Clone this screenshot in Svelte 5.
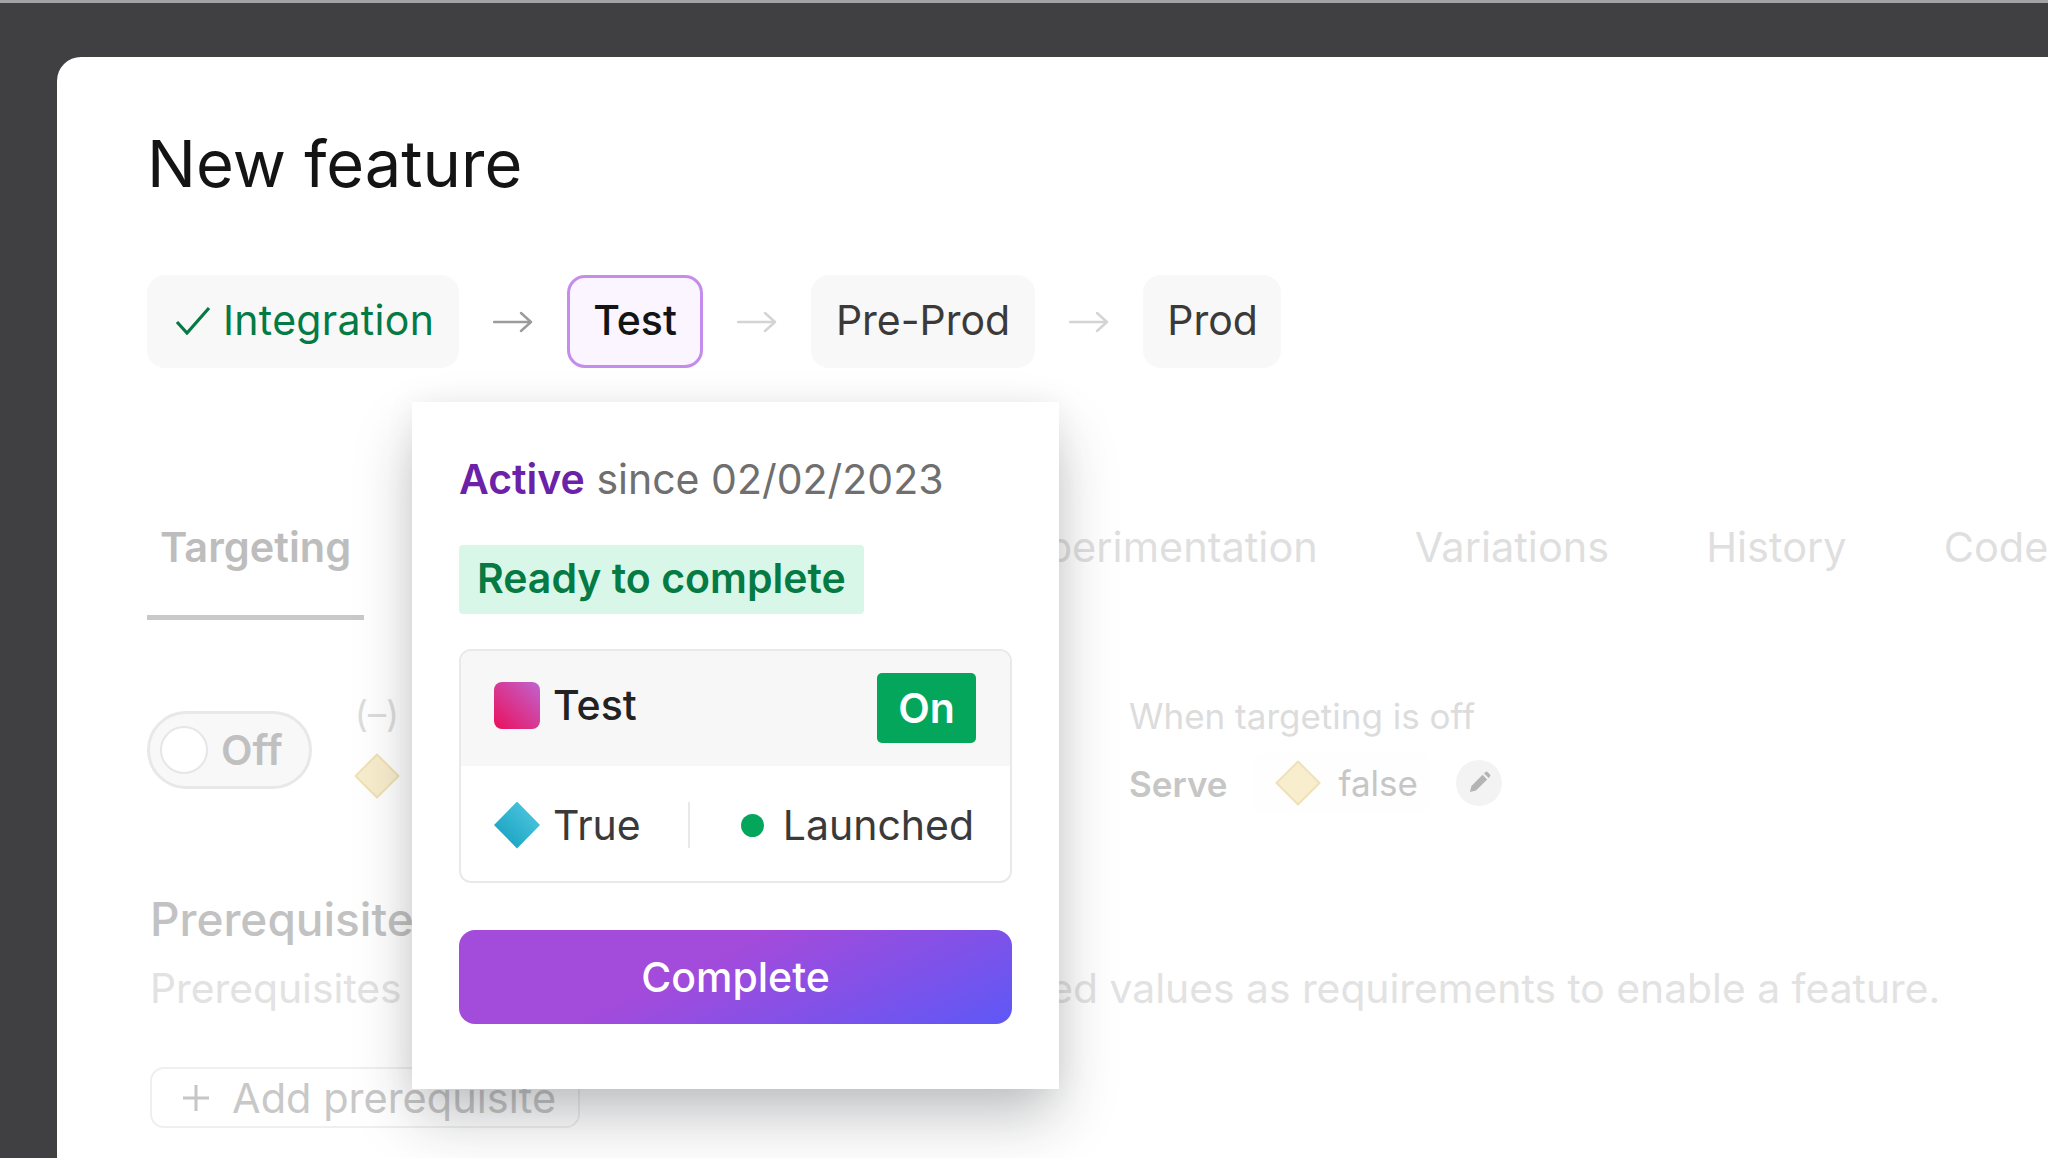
<script lang="ts">
	const tabs = ['Experimentation', 'Variations', 'History', 'Code'];
	const envs = [
		{ name: 'Pre-Prod', next: true },
		{ name: 'Prod', next: false }
	];
</script>

{#snippet arrow(faded = false)}
	<svg class="arrow" class:faded width="40" height="24" viewBox="0 0 40 24" fill="none">
		<path d="M1 12h37M28 3l10 9-10 9" stroke-width="2.4" stroke-linecap="round" stroke-linejoin="round" />
	</svg>
{/snippet}

{#snippet flag()}
	<svg class="flag" width="46" height="46" viewBox="0 0 46 46">
		<path d="M23 1.5L44.5 23 23 44.5 1.5 23z" fill="#f8eecd" stroke="#efe1b6" stroke-width="2" stroke-linejoin="round" />
	</svg>
{/snippet}

<div class="desktop">
	<main class="card">
		<h1>New feature</h1>

		<nav class="steps">
			<div class="step done">
				<svg width="36" height="30" viewBox="0 0 36 30" fill="none">
					<path d="M2 17l10 11L34 3" stroke="#047a44" stroke-width="3.2" />
				</svg>
				Integration
			</div>
			{@render arrow()}
			<div class="step current">Test</div>
			{@render arrow(true)}
			{#each envs as env}
				<div class="step" class:last={!env.next}>{env.name}</div>
				{#if env.next}
					{@render arrow(true)}
				{/if}
			{/each}
		</nav>

		<div class="tabs">
			<div class="tab active">Targeting</div>
			<div class="tab-list">
				{#each tabs as t}
					<div class="tab">{t}</div>
				{/each}
			</div>
		</div>

		<div class="targeting">
			<div class="toggle">
				<span class="knob"></span>
				<span>Off</span>
			</div>
			<div class="default-col">
				<span class="paren">(–)</span>
				{@render flag()}
			</div>
			<div class="off-col">
				<div class="off-label">When targeting is off</div>
				<div class="serve">
					<b>Serve</b>
					<div class="serve-pill">
						{@render flag()}
						<span>false</span>
					</div>
					<div class="edit">
						<svg width="24" height="24" viewBox="0 0 24 24" fill="#b4b4b4">
							<path d="M3 21l1.4-6L15.6 3.8l4.6 4.6L9 19.6zM17 2.4l1.5-1.4a1.5 1.5 0 0 1 2 0L23 3.4a1.5 1.5 0 0 1 0 2L21.6 7z" />
						</svg>
					</div>
				</div>
			</div>
		</div>

		<section class="prereq">
			<h2>Prerequisites</h2>
			<p>Prerequisites let you apply other features' served values as requirements to enable a feature.</p>
			<div class="add">
				<svg width="28" height="28" viewBox="0 0 28 28" fill="none">
					<path d="M14 1v26M1 14h26" stroke="#c6c6c6" stroke-width="3" />
				</svg>
				Add prerequisite
			</div>
		</section>

		<aside class="popover">
			<div class="since"><strong>Active</strong> since 02/02/2023</div>
			<div class="ready">Ready to complete</div>
			<div class="env-box">
				<div class="env-head">
					<span class="env-color"></span>
					<span class="env-name">Test</span>
					<span class="on">On</span>
				</div>
				<div class="env-body">
					<span class="true-flag"></span>
					<span class="true-text">True</span>
					<span class="sep"></span>
					<span class="dot"></span>
					<span>Launched</span>
				</div>
			</div>
			<button class="complete">Complete</button>
		</aside>
	</main>
</div>

<style>
	:global(body) {
		margin: 0;
		background: #404042;
	}

	.desktop {
		box-sizing: border-box;
		height: 1158px;
		overflow: hidden;
		padding: 54px 0 0 57px;
		background: #404042;
		border-top: 3px solid #a3a3a4;
		font-family: Inter, 'Noto Sans', sans-serif;
	}

	.card {
		position: relative;
		height: 1200px;
		padding: 68px 0 0 90px;
		box-sizing: border-box;
		background: #fff;
		border-radius: 24px 0 0 0;
	}

	h1 {
		margin: 0;
		font-size: 65px;
		font-weight: 400;
		line-height: 78px;
		color: #141414;
	}

	.steps {
		display: flex;
		align-items: center;
		gap: 34px;
		margin-top: 72px;
		font-size: 41px;
	}

	.step {
		display: flex;
		align-items: center;
		height: 93px;
		box-sizing: border-box;
		padding: 0 25px 4px;
		background: #f8f8f8;
		border-radius: 18px;
		color: #3a3a3a;
	}

	.step.done {
		gap: 12px;
		padding-left: 28px;
		color: #047a44;
		letter-spacing: 0.3px;
	}

	.step.current {
		padding: 0 23px 4px;
		border: 3px solid #c58cec;
		background: #faf5fe;
		color: #141414;
		font-weight: 500;
	}

	.step.last {
		padding: 0 23px 4px 24px;
	}

	.arrow {
		stroke: #9b9b9b;
		flex: none;
	}

	.arrow.faded {
		stroke: #d4d4d4;
	}

	.tabs {
		display: flex;
		margin-top: 155px;
		font-size: 41.5px;
		line-height: 48px;
		color: #dfdfdf;
		white-space: nowrap;
	}

	.tab {
		padding: 0 0 44px;
	}

	.tab.active {
		padding: 0 13px 44px;
		border-bottom: 5px solid #c9c9c9;
		color: #bdbdbd;
		font-weight: 600;
	}

	.tab-list {
		display: flex;
		gap: 97px;
		margin-left: 635px;
	}

	.targeting {
		display: flex;
		align-items: flex-start;
		margin-top: 74px;
	}

	.toggle {
		display: flex;
		align-items: center;
		gap: 13px;
		width: 165px;
		height: 78px;
		box-sizing: border-box;
		margin-top: 17px;
		padding-left: 10px;
		background: #f8f8f8;
		border: 3px solid #e8e8e8;
		border-radius: 40px;
		font-size: 41px;
		font-weight: 600;
		color: #c0c0c0;
	}

	.knob {
		width: 48px;
		height: 48px;
		background: #fff;
		border: 2px solid #e6e6e6;
		border-radius: 50%;
		box-sizing: border-box;
	}

	.default-col {
		display: flex;
		flex-direction: column;
		align-items: center;
		width: 46px;
		margin-left: 42px;
	}

	.paren {
		font-size: 36px;
		line-height: 40px;
		color: #dcdcdc;
	}

	.flag {
		flex: none;
		display: block;
	}

	.default-col .flag {
		margin-top: 19px;
	}

	.off-col {
		margin-left: 729px;
	}

	.off-label {
		font-size: 35px;
		line-height: 44px;
		color: #dcdcdc;
		white-space: nowrap;
	}

	.serve {
		display: flex;
		align-items: center;
		margin-top: 15px;
		font-size: 35px;
		color: #c6c6c6;
	}

	.serve b {
		margin-top: 2px;
		font-weight: 600;
	}

	.serve-pill {
		display: flex;
		align-items: center;
		gap: 18px;
		height: 60px;
		margin-left: 25px;
		padding: 0 12px 0 22px;
		background: #fefefe;
		border-radius: 10px;
	}

	.edit {
		display: flex;
		align-items: center;
		justify-content: center;
		width: 46px;
		height: 46px;
		margin-left: 26px;
		background: #f3f3f3;
		border-radius: 50%;
	}

	.prereq {
		margin-top: 78px;
		padding-left: 3px;
	}

	h2 {
		margin: 0;
		font-size: 46px;
		font-weight: 500;
		line-height: 56px;
		color: #c2c2c2;
	}

	.prereq p {
		margin: 17px 0 0;
		font-size: 40.8px;
		line-height: 48px;
		color: #e2e2e2;
		white-space: nowrap;
	}

	.add {
		display: flex;
		align-items: center;
		gap: 22px;
		width: 430px;
		height: 61px;
		box-sizing: border-box;
		margin-top: 55px;
		padding-left: 30px;
		border: 2px solid #efefef;
		border-radius: 14px;
		font-size: 41.5px;
		color: #c8c8c8;
		white-space: nowrap;
	}

	.popover {
		position: absolute;
		left: 355px;
		top: 345px;
		width: 647px;
		height: 687px;
		box-sizing: border-box;
		padding: 47px;
		background: #fff;
		box-shadow: 0 30px 56px -4px rgba(30, 32, 38, 0.28), 0 0 30px rgba(30, 32, 38, 0.05);
		font-size: 41px;
		color: #3a3a3a;
	}

	.since {
		line-height: 60px;
		color: #6f6f6f;
		white-space: nowrap;
	}

	.since strong {
		color: #6b21a8;
		font-weight: 600;
	}

	.ready {
		display: inline-block;
		height: 69px;
		margin-top: 36px;
		padding: 0 18px;
		background: #d9f7e8;
		border-radius: 4px;
		color: #047a44;
		font-weight: 600;
		line-height: 66px;
		white-space: nowrap;
	}

	.env-box {
		margin-top: 35px;
		height: 234px;
		box-sizing: border-box;
		border: 2.5px solid #e9e9e9;
		border-radius: 12px;
		overflow: hidden;
	}

	.env-head {
		display: flex;
		align-items: center;
		height: 115px;
		box-sizing: border-box;
		padding: 0 33px 2px;
		background: #f7f7f7;
		color: #222;
	}

	.env-color {
		width: 46px;
		height: 47px;
		margin-bottom: 5px;
		border-radius: 8px;
		background: linear-gradient(45deg, #eb0f5c, #c064cf);
	}

	.env-name {
		margin-left: 13px;
		margin-bottom: 6px;
		font-weight: 500;
	}

	.on {
		display: flex;
		align-items: center;
		justify-content: center;
		width: 99px;
		height: 70px;
		margin-left: auto;
		margin-right: 1px;
		background: #04a65c;
		border-radius: 5px;
		color: #fff;
		font-weight: 600;
	}

	.env-body {
		display: flex;
		align-items: center;
		height: 114px;
		padding: 2px 33px 0;
	}

	.true-flag {
		width: 46px;
		height: 47px;
		background: linear-gradient(45deg, #0f9cbc, #55cbe4);
		clip-path: polygon(50% 0, 100% 50%, 50% 100%, 0 50%);
	}

	.true-text {
		margin-left: 13px;
	}

	.sep {
		width: 2px;
		height: 46px;
		margin: 0 51px 0 47px;
		background: #e9e9e9;
	}

	.dot {
		width: 23px;
		height: 23px;
		margin-right: 19px;
		background: #04a65c;
		border-radius: 50%;
	}

	.complete {
		display: block;
		width: 100%;
		height: 94px;
		margin-top: 47px;
		border: none;
		border-radius: 16px;
		background: linear-gradient(155deg, #a34bdb 42%, #5e58f6 100%);
		color: #fff;
		font-family: inherit;
		font-size: 41px;
		font-weight: 500;
	}
</style>
